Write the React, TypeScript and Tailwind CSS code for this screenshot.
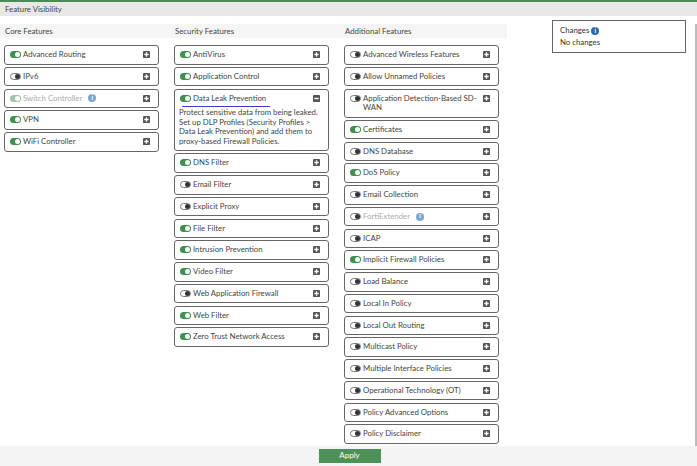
const core: Feature[] = [
  { name: "Advanced Routing", on: true },
  { name: "IPv6" },
  { name: "Switch Controller", on: true, disabled: true, info: true },
  { name: "VPN", on: true },
  { name: "WiFi Controller", on: true },
];

const security: Feature[] = [
  { name: "AntiVirus", on: true },
  { name: "Application Control", on: true },
  {
    name: "Data Leak Prevention",
    on: true,
    open: true,
    desc: "Protect sensitive data from being leaked. Set up DLP Profiles (Security Profiles > Data Leak Prevention) and add them to proxy-based Firewall Policies.",
  },
  { name: "DNS Filter", on: true },
  { name: "Email Filter" },
  { name: "Explicit Proxy" },
  { name: "File Filter", on: true },
  { name: "Intrusion Prevention", on: true },
  { name: "Video Filter", on: true },
  { name: "Web Application Firewall" },
  { name: "Web Filter", on: true },
  { name: "Zero Trust Network Access", on: true },
];

const additional: Feature[] = [
  { name: "Advanced Wireless Features" },
  { name: "Allow Unnamed Policies" },
  { name: "Application Detection-Based SD-WAN" },
  { name: "Certificates", on: true },
  { name: "DNS Database" },
  { name: "DoS Policy", on: true },
  { name: "Email Collection" },
  { name: "FortiExtender", disabled: true, info: true },
  { name: "ICAP" },
  { name: "Implicit Firewall Policies", on: true },
  { name: "Load Balance" },
  { name: "Local In Policy" },
  { name: "Local Out Routing" },
  { name: "Multicast Policy" },
  { name: "Multiple Interface Policies" },
  { name: "Operational Technology (OT)" },
  { name: "Policy Advanced Options" },
  { name: "Policy Disclaimer" },
];

type Feature = { name: string; on?: boolean; disabled?: boolean; info?: boolean; open?: boolean; desc?: string };

function Toggle({ on, disabled }: { on?: boolean; disabled?: boolean }) {
  if (on) {
    return (
      <span className={`flex h-[7px] w-[11px] shrink-0 items-center justify-end rounded-full bg-[#3f8f4f] pr-px ${disabled ? "opacity-50" : ""}`}>
        <span className="h-[5px] w-[5px] rounded-full bg-white" />
      </span>
    );
  }
  return (
    <span className="flex h-[7px] w-[11px] shrink-0 items-center justify-end rounded-full border border-[#777] bg-white">
      <span className="h-[5px] w-[5px] rounded-full bg-[#333]" />
    </span>
  );
}

function InfoDot({ className }: { className: string }) {
  return (
    <span className={`flex h-[8px] w-[8px] shrink-0 items-center justify-center rounded-full text-[6.5px] font-bold leading-none text-white ${className}`}>
      i
    </span>
  );
}

function ExpandBox({ open }: { open?: boolean }) {
  return (
    <svg width="7" height="7" viewBox="0 0 8 8" className="shrink-0">
      <rect width="8" height="8" rx="1" fill="#555" />
      <rect x="1.5" y="3.2" width="5" height="1.6" fill="#fff" />
      {!open && <rect x="3.2" y="1.5" width="1.6" height="5" fill="#fff" />}
    </svg>
  );
}

function FeatureCard({ f }: { f: Feature }) {
  return (
    <div className="w-[155px] rounded-[3px] border border-[#666] bg-white pb-[4px] pl-[5px] pr-[8px] pt-[4px]">
      <div className="flex items-start">
        <div className="mr-[2px] mt-[1px]">
          <Toggle on={f.on} disabled={f.disabled} />
        </div>
        <div className={`flex min-w-0 flex-1 items-center gap-[6px] ${f.disabled ? "text-[#aaa]" : "text-[#444]"}`}>
          <span className={f.open ? "relative" : ""}>
            {f.name}
            {f.open && <span className="absolute -bottom-[4px] left-[-11px] h-[1px] w-[88px] bg-[#3a3ad0]" />}
          </span>
          {f.info && <InfoDot className="bg-[#7aa6cf]" />}
        </div>
        <div className="ml-[5px] mt-[1px]">
          <ExpandBox open={f.open} />
        </div>
      </div>
      {f.desc && <p className="-ml-[1px] -mr-[4px] mt-[5px] text-[#444]">{f.desc}</p>}
    </div>
  );
}

function Column({ title, items, narrow }: { title: string; items: Feature[]; narrow?: boolean }) {
  return (
    <div className={`shrink-0 ${narrow ? "w-[167px]" : "w-[170px]"}`}>
      <div className="flex h-[14px] items-center bg-[#f5f5f5] pl-[5px] pt-[1px] text-[#444]">{title}</div>
      <div className="mt-[7px] flex flex-col gap-[2.25px] pl-[4px]">
        {items.map((f) => (
          <FeatureCard key={f.name} f={f} />
        ))}
        {narrow && <div className="h-[19px] w-[155px] shrink-0 rounded-[3px] border border-[#666]" />}
      </div>
    </div>
  );
}

export default function App() {
  return (
    <div className="flex h-[466px] w-[697px] flex-col overflow-hidden bg-white font-['Lato',sans-serif] text-[7.8px] leading-[9.5px]">
      <div className="h-[2px] shrink-0 bg-[#4c8a57]" />
      <div className="flex h-[14px] shrink-0 items-center bg-[#e8e8e8] pl-[5px] pt-[1px] text-[#444]">Feature Visibility</div>
      <div className="relative flex min-h-0 flex-1 overflow-hidden pt-[8px]">
        <Column title="Core Features" items={core} />
        <Column title="Security Features" items={security} />
        <Column title="Additional Features" items={additional} narrow />
        <div className="ml-[45px] -mt-[4px] h-[33px] w-[134px] shrink-0 border border-[#666] bg-white pl-[7px] pt-[5px] text-[#333]">
          <div className="flex items-center gap-[2px]">
            <span>Changes</span>
            <InfoDot className="bg-[#2b6aa8]" />
          </div>
          <div className="mt-[2px]">No changes</div>
        </div>
        <div className="absolute bottom-0 right-0 top-[8px] w-[2px] bg-[#bbb]" />
      </div>
      <div className="flex h-[20px] shrink-0 items-center justify-center bg-[#f4f4f4]">
        <button className="ml-[2px] h-[14px] w-[62px] bg-[#4e9158] text-center text-[8px] text-white">Apply</button>
      </div>
    </div>
  );
}
